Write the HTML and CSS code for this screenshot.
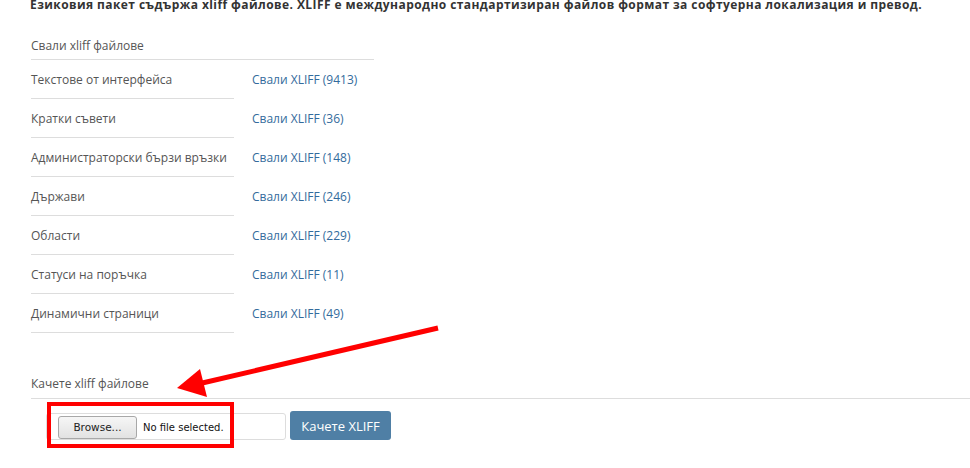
FILE: index.html
```html
<!DOCTYPE html>
<html lang="bg">
<head>
<meta charset="utf-8">
<title>XLIFF</title>
<link rel="stylesheet" href="styles.css">
</head>
<body>
<div class="page">
  <p class="intro">Езиковия пакет съдържа xliff файлове. XLIFF е международно стандартизиран файлов формат за софтуерна локализация и превод.</p>

  <section class="download">
    <div class="legend">Свали xliff файлове</div>
    <table class="files">
      <tr><td class="name">Текстове от интерфейса</td><td class="dl"><a href="#">Свали XLIFF (9413)</a></td></tr>
      <tr><td class="name">Кратки съвети</td><td class="dl"><a href="#">Свали XLIFF (36)</a></td></tr>
      <tr><td class="name">Администраторски бързи връзки</td><td class="dl"><a href="#">Свали XLIFF (148)</a></td></tr>
      <tr><td class="name">Държави</td><td class="dl"><a href="#">Свали XLIFF (246)</a></td></tr>
      <tr><td class="name">Области</td><td class="dl"><a href="#">Свали XLIFF (229)</a></td></tr>
      <tr><td class="name">Статуси на поръчка</td><td class="dl"><a href="#">Свали XLIFF (11)</a></td></tr>
      <tr><td class="name">Динамични страници</td><td class="dl"><a href="#">Свали XLIFF (49)</a></td></tr>
    </table>
  </section>

  <section class="upload">
    <div class="legend legend-wide">Качете xliff файлове</div>
    <form class="upload-form">
      <div class="file-field">
        <span class="browse">Browse...</span>
        <span class="nofile">No file selected.</span>
      </div>
      <button type="button" class="btn-primary">Качете XLIFF</button>
    </form>
  </section>
</div>

<svg class="annotation" width="970" height="468" viewBox="0 0 970 468">
  <line x1="438" y1="328" x2="198" y2="384" stroke="#ff0000" stroke-width="5" stroke-linecap="butt"/>
  <polygon points="177,388 200,369 207,397" fill="#ff0000"/>
  <rect x="49" y="404" width="183" height="42" fill="none" stroke="#ff0000" stroke-width="4"/>
</svg>
</body>
</html>
```

FILE: styles.css
```css
html, body {
  margin: 0;
  padding: 0;
  background: #ffffff;
}

body {
  font-family: "Open Sans", "Liberation Sans", sans-serif;
  font-size: 12px;
  line-height: 18px;
  color: #555555;
  width: 970px;
  height: 468px;
  overflow: hidden;
  position: relative;
}

.page {
  padding-left: 30px;
}

.intro {
  margin: -4px 0 0 0;
  font-size: 12px;
  font-weight: bold;
  color: #333333;
  letter-spacing: 0.42px;
  white-space: nowrap;
}

.download,
.upload {
  margin-left: 1px;
}

.legend {
  width: 343px;
  margin-top: 22px;
  line-height: 20px;
  padding-bottom: 3px;
  border-bottom: 1px solid #dddddd;
}

.legend-wide {
  width: auto;
  margin-top: 41px;
  padding-bottom: 4px;
}

.files {
  border-collapse: collapse;
  border-spacing: 0;
}

.files td {
  padding: 11px 0 9px 0;
  line-height: 18px;
  vertical-align: middle;
  white-space: nowrap;
}

.files td.name {
  width: 203px;
  border-bottom: 1px solid #dddddd;
}

.files td.dl {
  padding-left: 18px;
}

.files a {
  color: #336b9c;
  text-decoration: none;
}

.upload-form {
  display: flex;
  align-items: flex-end;
  gap: 4px;
  margin: 12px 0 0 15px;
}

.file-field {
  box-sizing: border-box;
  width: 240px;
  height: 27px;
  border: 1px solid #dddddd;
  border-radius: 3px;
  background: #ffffff;
  display: flex;
  align-items: flex-start;
  padding: 2px 0 0 11px;
  font-family: "DejaVu Sans", sans-serif;
  font-size: 10px;
  color: #111111;
}

.browse {
  box-sizing: border-box;
  width: 79px;
  height: 23px;
  line-height: 21px;
  text-align: center;
  border: 1px solid #a8a8a8;
  border-radius: 3px;
  background: linear-gradient(#f6f6f6, #e2e2e2);
  color: #222222;
  font-size: 10.5px;
}

.nofile {
  margin-left: 6px;
  line-height: 23px;
}

.btn-primary {
  box-sizing: border-box;
  width: 101px;
  height: 29px;
  border: none;
  border-radius: 3px;
  background: #4f7fa5;
  color: #ffffff;
  font-family: "Open Sans", "Liberation Sans", sans-serif;
  font-size: 13px;
  padding: 0;
}

.annotation {
  position: absolute;
  top: 0;
  left: 0;
  pointer-events: none;
}
```
